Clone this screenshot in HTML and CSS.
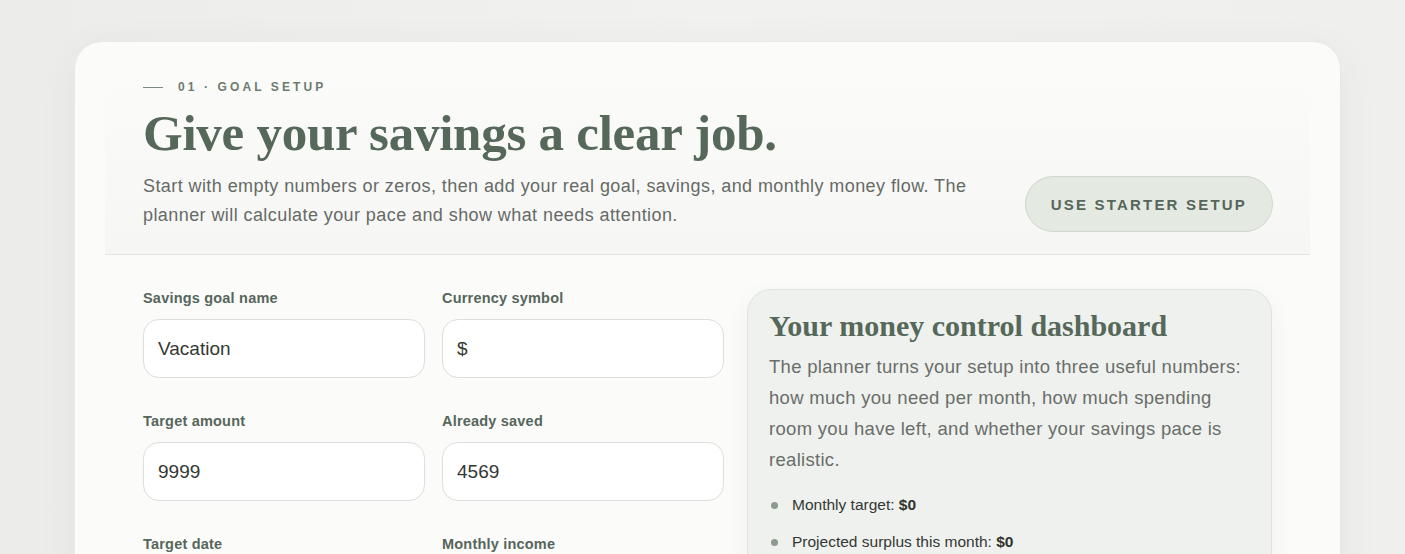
FILE: index.html
```html
<!DOCTYPE html>
<html lang="en">
<head>
<meta charset="utf-8">
<title>Goal setup</title>
<link rel="stylesheet" href="styles.css">
</head>
<body>
<main class="card">
  <header class="setup-head">
    <div class="head-text">
      <div class="eyebrow"><span class="eyebrow-line"></span>01 · GOAL SETUP</div>
      <h1 class="title">Give your savings a clear job.</h1>
      <p class="lead">Start with empty numbers or zeros, then add your real goal, savings, and monthly money flow. The planner will calculate your pace and show what needs attention.</p>
    </div>
    <button class="starter-btn" type="button">USE STARTER SETUP</button>
  </header>
  <section class="setup-body">
    <form class="fields">
      <label class="field"><span class="field-label">Savings goal name</span><input class="field-input" type="text" value="Vacation"></label>
      <label class="field"><span class="field-label">Currency symbol</span><input class="field-input" type="text" value="$"></label>
      <label class="field"><span class="field-label">Target amount</span><input class="field-input" type="text" value="9999"></label>
      <label class="field"><span class="field-label">Already saved</span><input class="field-input" type="text" value="4569"></label>
      <label class="field"><span class="field-label">Target date</span><input class="field-input" type="text" value=""></label>
      <label class="field"><span class="field-label">Monthly income</span><input class="field-input" type="text" value=""></label>
    </form>
    <aside class="dash">
      <h2 class="dash-title">Your money control dashboard</h2>
      <p class="dash-text">The planner turns your setup into three useful numbers: how much you need per month, how much spending room you have left, and whether your savings pace is realistic.</p>
      <ul class="dash-list">
        <li>Monthly target: <strong>$0</strong></li>
        <li>Projected surplus this month: <strong>$0</strong></li>
        <li>Savings pace: <strong>Not set</strong></li>
      </ul>
    </aside>
  </section>
</main>
</body>
</html>
```

FILE: styles.css
```css
* { box-sizing: border-box; }

html, body {
  margin: 0;
  padding: 0;
}

body {
  background: linear-gradient(90deg, #ececea 0%, #f1f1ef 50%, #efefed 100%);
  font-family: "Liberation Sans", Arial, sans-serif;
  color: #333;
  padding-top: 41px;
  height: 554px;
  overflow: hidden;
}

.card {
  margin-left: 74px;
  width: 1267px;
  background: #fbfbfa;
  border-radius: 28px;
  border: 1px solid #e8e9e6;
  box-shadow: 0 10px 40px rgba(60, 70, 60, 0.06);
  padding: 30px 30px 40px;
  min-height: 700px;
}

.setup-head {
  display: flex;
  align-items: flex-end;
  justify-content: space-between;
  padding: 8px 37px 24px 38px;
  border-bottom: 1px solid #e1e4e0;
  background: linear-gradient(180deg, #fbfbfa 0%, #f6f7f5 100%);
}

.head-text {
  max-width: 860px;
}

.eyebrow {
  display: flex;
  align-items: center;
  gap: 15px;
  font-size: 12px;
  line-height: 14px;
  font-weight: 700;
  letter-spacing: 3.1px;
  color: #6d7b6e;
}

.eyebrow-line {
  display: block;
  width: 20px;
  height: 1px;
  background: #7d897e;
}

.title {
  margin: 12px 0 0;
  font-family: "Liberation Serif", "Times New Roman", serif;
  font-weight: 700;
  font-size: 51px;
  line-height: 55px;
  letter-spacing: -0.25px;
  color: #56685a;
}

.lead {
  margin: 11px 0 0;
  font-size: 18px;
  line-height: 29px;
  letter-spacing: 0.42px;
  color: #666a66;
}

.starter-btn {
  height: 56px;
  padding: 0 25px;
  border-radius: 28px;
  border: 1px solid #cfd7cd;
  background: #e4e9e2;
  color: #56665a;
  font-family: "Liberation Sans", Arial, sans-serif;
  font-weight: 700;
  font-size: 15px;
  letter-spacing: 2.2px;
  margin-bottom: -2px;
}

.setup-body {
  display: grid;
  grid-template-columns: 581px 1fr;
  gap: 23px;
  padding: 34px 38px 0 38px;
  align-items: start;
}

.fields {
  display: grid;
  grid-template-columns: 1fr 1fr;
  column-gap: 17px;
  row-gap: 35px;
  padding-top: 1px;
  margin: 0;
}

.field {
  display: flex;
  flex-direction: column;
  gap: 13px;
}

.field-label {
  font-size: 14.5px;
  line-height: 16px;
  font-weight: 700;
  letter-spacing: 0.2px;
  color: #56665a;
}

.field-input {
  height: 59px;
  border: 1px solid #dcdfdb;
  border-radius: 16px;
  background: #fff;
  padding: 0 14px;
  font-family: "Liberation Sans", Arial, sans-serif;
  font-size: 19px;
  color: #343834;
  outline: none;
}

.dash {
  background: #eef1ed;
  border: 1px solid #dfe4de;
  border-radius: 24px;
  padding: 19px 21px 24px;
  box-shadow: 0 8px 24px rgba(60, 70, 60, 0.05);
}

.dash-title {
  margin: 0;
  font-family: "Liberation Serif", "Times New Roman", serif;
  font-weight: 700;
  font-size: 30px;
  line-height: 34px;
  color: #56685a;
}

.dash-text {
  margin: 8px 0 0;
  font-size: 18.5px;
  line-height: 31px;
  letter-spacing: 0.3px;
  color: #6a6e6a;
}

.dash-list {
  list-style: none;
  margin: 19px 0 0;
  padding: 0;
  display: flex;
  flex-direction: column;
  gap: 15px;
}

.dash-list li {
  display: flex;
  align-items: center;
  font-size: 15.5px;
  line-height: 22px;
  color: #343834;
  white-space: pre;
}

.dash-list li::before {
  content: "";
  width: 7px;
  height: 7px;
  border-radius: 50%;
  background: #8d9a8d;
  margin: 0 14px 0 2px;
  flex: none;
}

.dash-list strong {
  font-weight: 700;
  color: #2f332f;
}
```
